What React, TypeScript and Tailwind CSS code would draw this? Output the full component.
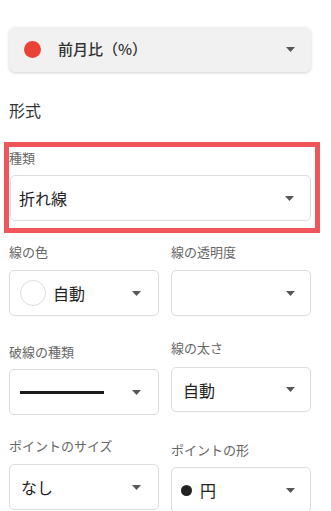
const font = "font-['Noto_Sans_CJK_JP','Noto_Sans',sans-serif]";

function Caret() {
  return (
    <svg width="9" height="5" viewBox="0 0 9 5" className="shrink-0">
      <path d="M0 0h9L4.5 5z" fill="#575757" />
    </svg>
  );
}

function Label({ text, className = '' }: { text: string; className?: string }) {
  return <div className={`text-[13px] leading-[18px] text-[#666] ${className}`}>{text}</div>;
}

function Select({
  children,
  className = '',
  pl = 'pl-[10px]',
  pr = 'pr-[17px]',
}: {
  children?: React.ReactNode;
  className?: string;
  pl?: string;
  pr?: string;
}) {
  return (
    <div
      className={`flex items-center justify-between rounded-[5px] border border-[#dcdcdc] bg-white text-[16px] text-[#222] ${pl} ${pr} ${className}`}
    >
      <div className="flex items-center">{children}</div>
      <Caret />
    </div>
  );
}

export default function App() {
  return (
    <div className={`w-[331px] h-[511px] overflow-hidden bg-white ${font}`}>
      <div className="pt-[27px] pl-[9px]">
        {/* series selector */}
        <div className="flex h-[45px] w-[302px] items-center justify-between rounded-[6px] bg-[#f1f1f1] pl-[15px] pr-[16px] shadow-[0_1px_3px_rgba(0,0,0,0.18)]">
          <div className="flex items-center gap-[17px]">
            <span className="h-[17px] w-[17px] rounded-full bg-[#ea4335]" />
            <span className="text-[15px] font-medium text-[#333]">前月比（%）</span>
          </div>
          <Caret />
        </div>

        <div className="mt-[26px] text-[16px] leading-[24px] text-[#333]">形式</div>

        {/* highlighted type selector */}
        <div className="ml-[-5px] mt-[20px] w-[316px] border-[5px] border-[#f0555c] pb-[7px] pr-[4px] pt-[2px]">
          <Label text="種類" />
          <Select className="ml-[1px] mt-[8px] h-[46px]" pl="pl-[8px]" pr="pr-[16px]">
            折れ線
          </Select>
        </div>

        <div className="mt-[10px] flex w-[302px] gap-[12px]">
          {/* left column */}
          <div className="flex w-[150px] flex-col">
            <Label text="線の色" />
            <Select className="mt-[9px] h-[46px]" pl="pl-[10px]" pr="pr-[17px]">
              <span className="h-[26px] w-[26px] rounded-full border border-[#dcdcdc]" />
              <span className="ml-[7px]">自動</span>
            </Select>
            <Label text="破線の種類" className="mt-[27px]" />
            <Select className="mt-[8px] h-[46px]" pl="pl-[10px]" pr="pr-[17px]">
              <span className="block h-[3px] w-[84px] bg-[#1a1a1a]" />
            </Select>
            <Label text="ポイントのサイズ" className="mt-[22px]" />
            <Select className="mt-[9px] h-[46px]" pl="pl-[11px]" pr="pr-[17px]">
              なし
            </Select>
          </div>

          {/* right column */}
          <div className="flex w-[140px] flex-col">
            <Label text="線の透明度" />
            <Select className="mt-[9px] h-[46px]" pr="pr-[15px]" />
            <Label text="線の太さ" className="mt-[23px]" />
            <Select className="mt-[10px] h-[45px]" pl="pl-[11px]" pr="pr-[15px]">
              自動
            </Select>
            <Label text="ポイントの形" className="mt-[29px]" />
            <Select className="mt-[8px] h-[46px]" pl="pl-[9px]" pr="pr-[15px]">
              <span className="h-[11px] w-[11px] rounded-full bg-[#222]" />
              <span className="ml-[8px]">円</span>
            </Select>
          </div>
        </div>
      </div>
    </div>
  );
}
